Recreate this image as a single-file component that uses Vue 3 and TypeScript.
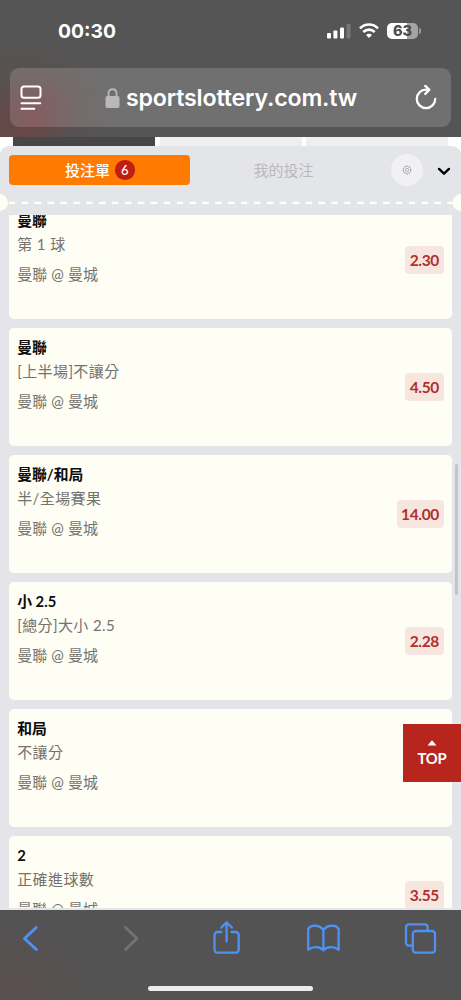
<template>
    <div class="screen">
        <header class="browser-top">
            <div class="status-bar">
                <span class="status-time">00:30</span>
                <div class="status-icons">
                    <svg class="signal" width="24" height="16" viewBox="0 0 24 16" fill="#fff">
                        <rect x="0" y="10" width="4" height="5.5" rx="1.1" />
                        <rect x="6.4" y="7.5" width="4" height="8" rx="1.1" />
                        <rect x="13" y="4.5" width="4" height="11" rx="1.1" />
                        <rect x="19.5" y="1" width="4" height="14.5" rx="1.1" opacity="0.2" />
                    </svg>
                    <svg class="wifi" width="20" height="15" viewBox="0 0 20 15" fill="none" stroke="#fff" stroke-width="2.7">
                        <path d="M1 5.4C6 .2 14 .2 19 5.4" />
                        <path d="M4.3 9c3.3-3.3 8.1-3.3 11.4 0" />
                        <path d="M10 14.9 7 11.9c1.6-1.6 4.4-1.6 6 0z" fill="#fff" stroke="none" />
                    </svg>
                    <div class="battery"><span class="battery-level">63</span></div>
                </div>
            </div>
            <div class="address-bar">
                <svg width="22" height="26" viewBox="0 0 22 26" fill="none" stroke="#fff" stroke-width="2" stroke-linecap="round">
                    <rect x="1.5" y="1.5" width="19" height="11.3" rx="2.6" />
                    <path d="M1.5 18.3h18.8M1.5 23.8h12.8" />
                </svg>
                <div class="address">
                    <svg width="15" height="20" viewBox="0 0 15 20">
                        <path d="M3.5 9V5.2C3.5-.1 11.5-.1 11.5 5.2V9" fill="none" stroke="#b9b8bb" stroke-width="1.8" />
                        <rect x=".5" y="8" width="14" height="12" rx="2" fill="#b9b8bb" />
                    </svg>
                    <span>sportslottery.com.tw</span>
                </div>
                <svg width="22" height="26" viewBox="0 0 22 26" fill="none" stroke="#fff" stroke-width="2.3" stroke-linecap="round" stroke-linejoin="round">
                    <path d="M13.6 4.7H11A9.2 9.2 0 1 0 20.2 13.9" />
                    <path d="M10.3 .9 14.3 4.8 10.3 8.9" />
                </svg>
            </div>
        </header>

        <main class="page">
            <div class="page-tabs">
                <span class="page-tab active"></span>
                <span class="page-tab"></span>
                <span class="page-tab"></span>
            </div>
            <section class="slip">
                <div class="slip-header">
                    <button class="slip-tab active" @click="activeTab = 'slip'">
                        投注單 <span class="count">6</span>
                    </button>
                    <button class="slip-tab" @click="activeTab = 'mine'">我的投注</button>
                    <button class="settings" title="設定">
                        <svg width="10" height="10" viewBox="0 0 10 10" fill="none" stroke="#a9a9ac">
                            <circle cx="5" cy="5" r="3.8" stroke-width="1.2" stroke-dasharray="1.9 .5" />
                            <circle cx="5" cy="5" r="1.6" stroke-width=".9" />
                        </svg>
                    </button>
                    <svg class="chevron" width="14" height="9" viewBox="0 0 14 9" fill="none" stroke="#000" stroke-width="2.4" stroke-linecap="round" stroke-linejoin="round">
                        <path d="M2 1.9 7 6.7 12 1.9" />
                    </svg>
                </div>
                <div class="divider">
                    <svg width="461" height="18" viewBox="0 0 461 18">
                        <path d="M8.8 8.8H453" stroke="#fffffb" stroke-width="2.2" stroke-dasharray="6.6 6.3" />
                        <circle cx="-.5" cy="8.5" r="8.5" fill="#fffef4" />
                        <circle cx="461" cy="8.5" r="8.5" fill="#fffef4" />
                    </svg>
                </div>
                <div class="bet-list">
                    <article v-for="(bet, i) in bets" :key="i" class="bet">
                        <div class="bet-info">
                            <h3 class="bet-pick">{{ bet.pick }}</h3>
                            <p class="bet-market">{{ bet.market }}</p>
                            <p class="bet-match">曼聯 @ 曼城</p>
                        </div>
                        <span v-if="bet.odds" class="odds">{{ bet.odds }}</span>
                    </article>
                    <span class="scroll-thumb"></span>
                </div>
            </section>
            <button class="to-top">
                <svg width="10" height="6" viewBox="0 0 10 6"><path d="M5 .3 9.5 5.5H.5z" fill="#fff" /></svg>
                <span>TOP</span>
            </button>
        </main>

        <footer class="browser-bottom">
            <svg width="461" height="90" viewBox="0 0 461 90" fill="none" stroke="#4d91f7" stroke-width="2.3" stroke-linecap="round" stroke-linejoin="round">
                <path d="M36.3 17.5 24.5 28.5 36.3 39.5" stroke-width="3" />
                <path d="M125.5 17.5 137 28.5 125.5 39.5" stroke="#737373" stroke-width="2.7" />
                <path d="M221.5 22H217.5a3 3 0 0 0-3 3V39.7a3 3 0 0 0 3 3H235.7a3 3 0 0 0 3-3V25a3 3 0 0 0-3-3H231.5" />
                <path d="M226.6 31.5V12.5M221.3 17.6 226.6 12.3 231.9 17.6" />
                <path d="M323.4 20.2C320 14.6 311.3 14.4 308.2 18.7V39.8C312.5 36.1 319.8 36.1 323.4 40.3 327 36.1 334.3 36.1 338.6 39.8V18.7C335.5 14.4 326.8 14.6 323.4 20.2ZM323.4 20.2V40.3" />
                <rect x="412.8" y="21" width="22.2" height="21.7" rx="3" />
                <path d="M412.5 35.7H409a3 3 0 0 1-3-3V17.3a3 3 0 0 1 3-3H424.6a3 3 0 0 1 3 3V20.5" />
            </svg>
            <span class="home-indicator"></span>
        </footer>
    </div>
</template>

<script setup lang="ts">
import { ref } from 'vue'

interface Bet {
    pick: string
    market: string
    odds?: string
}

const activeTab = ref<'slip' | 'mine'>('slip')

const bets: Bet[] = [
    { pick: '曼聯', market: '第 1 球', odds: '2.30' },
    { pick: '曼聯', market: '[上半場]不讓分', odds: '4.50' },
    { pick: '曼聯/和局', market: '半/全場賽果', odds: '14.00' },
    { pick: '小 2.5', market: '[總分]大小 2.5', odds: '2.28' },
    { pick: '和局', market: '不讓分' },
    { pick: '2', market: '正確進球數', odds: '3.55' },
]
</script>

<style>
body {
    margin: 0;
    overflow: hidden;
}
</style>

<style scoped>
.screen {
    display: flex;
    flex-direction: column;
    width: 461px;
    height: 1000px;
    overflow: hidden;
    font-family: Lato, "Noto Sans CJK TC", sans-serif;
}

button {
    padding: 0;
    border: 0;
    background: none;
    font: inherit;
}

svg {
    display: block;
    flex-shrink: 0;
}

.browser-top {
    height: 137px;
    flex-shrink: 0;
    box-sizing: border-box;
    padding: 0 10px;
    background: radial-gradient(circle at 22px 122px, #6a4545 0, rgba(90, 78, 78, 0.5) 50px, transparent 95px), #555;
    font-family: Inter, sans-serif;
    color: #fff;
}

.status-bar {
    display: flex;
    justify-content: space-between;
    height: 68px;
    box-sizing: border-box;
    padding: 20px 31px 0 48px;
}

.status-time {
    font-size: 19.3px;
    line-height: 23px;
    font-weight: 700;
}

.status-icons {
    display: flex;
    align-items: flex-start;
    padding-top: 3px;
}

.wifi {
    margin: 0 8px 0 8px;
}

.battery {
    position: relative;
    width: 31px;
    height: 16px;
    border-radius: 5px;
    background: linear-gradient(90deg, #fff 63%, #a4a4a4 63%);
    text-align: center;
    margin-right: 2px;
}

.battery::after {
    content: "";
    position: absolute;
    left: 32px;
    top: 5px;
    width: 2px;
    height: 6px;
    border-radius: 0 2px 2px 0;
    background: #9a9a9a;
}

.battery-level {
    display: block;
    color: #4c4c4c;
    font-size: 14.5px;
    line-height: 16px;
    font-weight: 800;
}

.address-bar {
    display: flex;
    align-items: center;
    justify-content: space-between;
    height: 59px;
    box-sizing: border-box;
    padding: 0 14px 0 10px;
    border-radius: 9px;
    background: radial-gradient(circle at 22px 48px, #855c5d 0, rgba(122, 102, 102, 0.5) 45px, transparent 85px), #707070;
}

.address {
    display: flex;
    align-items: center;
    gap: 6px;
    margin-left: 5px;
    font-size: 23.2px;
    font-weight: 600;
    letter-spacing: -0.18px;
}

.page {
    position: relative;
    height: 773px;
    flex-shrink: 0;
    overflow: hidden;
    background: #fff;
}

.page-tabs {
    display: flex;
    gap: 4.5px;
    height: 9px;
    padding-left: 13px;
}

.page-tab {
    width: 142px;
    background: #eee;
}

.page-tab.active {
    background: #474747;
}

.slip {
    display: flex;
    flex-direction: column;
    height: 764px;
    border-radius: 9px 9px 0 0;
    background: #e4e5e8;
}

.slip-header {
    display: flex;
    align-items: center;
    height: 48px;
    box-sizing: border-box;
    padding-left: 8.5px;
}

.slip-tab {
    display: flex;
    align-items: center;
    justify-content: center;
    gap: 5px;
    width: 187px;
    height: 30px;
    color: #bababc;
    font-size: 15px;
    line-height: 28px;
}

.slip-tab.active {
    width: 181.5px;
    padding-left: 1px;
    box-sizing: border-box;
    border-radius: 4px;
    background: #ff7a00;
    color: #fff;
    font-weight: 500;
}

.count {
    width: 19.5px;
    height: 19.5px;
    border-radius: 50%;
    background: #c01e12;
    font-size: 13px;
    line-height: 20px;
    font-weight: 500;
    text-align: center;
}

.settings {
    display: flex;
    align-items: center;
    justify-content: center;
    width: 32px;
    height: 32px;
    margin-left: 14px;
    border-radius: 50%;
    background: #f1f1f3;
}

.chevron {
    margin: 2px 0 0 14px;
}

.divider {
    height: 21px;
}

.bet-list {
    position: relative;
    height: 693px;
    padding: 0 9px 0 8.5px;
    overflow: hidden;
}

.bet {
    display: flex;
    align-items: center;
    justify-content: space-between;
    height: 118.5px;
    box-sizing: border-box;
    margin-bottom: 8.5px;
    padding: 0 8.5px 0 8.7px;
    border-radius: 5px;
    background: #fffef5;
}

.bet:first-child {
    margin-top: -14.5px;
}

.bet-info {
    align-self: flex-start;
    padding-top: 8px;
}

.bet-pick,
.bet-market,
.bet-match {
    margin: 0;
    font-size: 15px;
    line-height: 22px;
    white-space: nowrap;
}

.bet-pick {
    color: #0c0c0c;
    font-size: 14.8px;
    font-weight: 700;
}

.bet-market,
.bet-match {
    color: #73726e;
}

.bet-market {
    margin-top: 2px;
    letter-spacing: 0.4px;
}

.bet-match {
    margin-top: 8px;
    letter-spacing: 0.1px;
}

.odds {
    height: 28px;
    padding: 0 4.5px;
    border-radius: 4px;
    background: #f7e6e0;
    color: #b0302b;
    font-size: 15.5px;
    line-height: 28px;
    font-weight: 700;
    letter-spacing: -0.35px;
}

.scroll-thumb {
    position: absolute;
    top: 249px;
    right: 3px;
    width: 3px;
    height: 131px;
    border-radius: 2px;
    background: #c3c4c7;
}

.to-top {
    position: absolute;
    top: 587px;
    right: 0;
    display: flex;
    flex-direction: column;
    align-items: center;
    width: 58px;
    height: 58px;
    padding-top: 16px;
    box-sizing: border-box;
    background: #b7251c;
    color: #fff;
    font-size: 14.8px;
    line-height: 25px;
    font-weight: 700;
    letter-spacing: -0.2px;
}

.browser-bottom {
    position: relative;
    height: 90px;
    flex-shrink: 0;
    background: radial-gradient(circle at 10px 90px, #5b504f 0, transparent 90px), #535353;
}

.home-indicator {
    position: absolute;
    left: 148px;
    bottom: 9px;
    width: 165px;
    height: 5px;
    border-radius: 3px;
    background: #ececec;
}
</style>
